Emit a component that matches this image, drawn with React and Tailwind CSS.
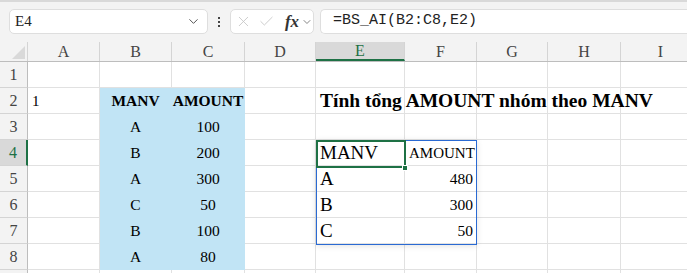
import { X, Check, ChevronDown } from 'lucide-react';

const serif = { fontFamily: '"Liberation Serif", "Times New Roman", serif' };

const cols = ['A', 'B', 'C', 'D', 'E', 'F', 'G', 'H', 'I'];
const widths = [72, 72, 73, 71, 89, 72, 71, 73, 80];

const fill = 'bg-[#c1e4f5] border-[#c1e4f5]';

// cell content per row, keyed by column letter
const rows = {
  1: {},
  2: {
    A: { text: '1', align: 'left', size: 'text-[15px]' },
    B: { text: 'MANV', bold: true },
    C: { text: 'AMOUNT', bold: true },
    E: { text: 'Tính tổng AMOUNT nhóm theo MANV', bold: true, align: 'left', size: 'text-[19.5px]', overflow: true },
  },
  3: { B: { text: 'A' }, C: { text: '100' } },
  4: {
    B: { text: 'B' },
    C: { text: '200' },
    E: { text: 'MANV', align: 'left', size: 'text-[19px]' },
    F: { text: 'AMOUNT', align: 'left', size: 'text-[15px]' },
  },
  5: { B: { text: 'A' }, C: { text: '300' }, E: { text: 'A', align: 'left', size: 'text-[19px]' }, F: { text: '480', align: 'right' } },
  6: { B: { text: 'C' }, C: { text: '50' }, E: { text: 'B', align: 'left', size: 'text-[19px]' }, F: { text: '300', align: 'right' } },
  7: { B: { text: 'B' }, C: { text: '100' }, E: { text: 'C', align: 'left', size: 'text-[19px]' }, F: { text: '50', align: 'right' } },
  8: { B: { text: 'A' }, C: { text: '80' } },
  9: {},
};

function Cell({ col, row, data }) {
  const filled = (col === 'B' || col === 'C') && row >= 2 && row <= 8;
  const justify =
    data?.align === 'left' ? 'justify-start pl-[4px]' : data?.align === 'right' ? 'justify-end pr-[3px]' : 'justify-center';
  return (
    <div
      className={`relative flex h-[26px] shrink-0 items-end border-b border-r pb-[1px] ${
        filled ? fill : 'border-[#e1e1e1] bg-white'
      } ${justify} ${data?.overflow ? 'z-10 overflow-visible' : 'overflow-hidden'}`}
      style={{ width: widths[cols.indexOf(col)] }}
    >
      {data && (
        <span
          className={`whitespace-nowrap leading-[22px] text-black ${data.size || 'text-[15.5px]'} ${
            data.bold ? 'font-bold' : ''
          }`}
          style={serif}
        >
          {data.text}
        </span>
      )}
    </div>
  );
}

export default function App() {
  return (
    <div className="h-[273px] w-[687px] overflow-hidden bg-[#f3f3f3]">
      {/* formula bar */}
      <div className="flex h-[42px] items-start border-t-[2px] border-[#d9d9d9] pt-[7px]">
        <div className="ml-[9px] flex h-[25px] w-[199px] items-center justify-between rounded-[5px] border border-[#dedede] bg-white pl-[5px] pr-[6px]">
          <span className="text-[15px] text-[#222]" style={serif}>E4</span>
          <ChevronDown size={15} strokeWidth={1.6} className="text-[#555]" />
        </div>
        <div className="flex h-[25px] w-[22px] flex-col items-center justify-center gap-[2px]">
          <span className="h-[2px] w-[2px] bg-[#444]" />
          <span className="h-[2px] w-[2px] bg-[#444]" />
          <span className="h-[2px] w-[2px] bg-[#444]" />
        </div>
        <div className="flex h-[25px] w-[84px] items-center rounded-[5px] border border-[#dedede] bg-white pl-[4px]">
          <X size={17} strokeWidth={1.2} className="text-[#c4c4c4]" />
          <Check size={17} strokeWidth={1.2} className="ml-[6px] text-[#c4c4c4]" />
          <span className="ml-[10px] text-[17px] font-bold italic text-[#333]" style={serif}>fx</span>
          <ChevronDown size={12} strokeWidth={1.6} className="ml-[2px] text-[#666]" />
        </div>
        <div className="ml-[6px] flex h-[25px] flex-1 items-center rounded-l-[5px] border border-r-0 border-[#dedede] bg-white pl-[12px]">
          <span className="text-[15px] text-[#222]" style={{ fontFamily: '"Liberation Mono", monospace' }}>
            =BS_AI(B2:C8,E2)
          </span>
        </div>
      </div>

      {/* sheet */}
      <div className="relative">
        {/* column headers */}
        <div className="flex h-[20px] border-b border-[#bdbdbd] bg-[#f3f3f3]">
          <div className="relative h-full w-[28px] shrink-0 border-r border-[#d4d4d4]">
            <svg className="absolute bottom-[2px] right-[2px]" width="13" height="13">
              <polygon points="13,0 13,13 0,13" fill="#d9d9d9" />
            </svg>
          </div>
          {cols.map((c, i) => (
            <div
              key={c}
              className={`flex shrink-0 items-center justify-center border-r border-[#d4d4d4] text-[16px] ${
                c === 'E' ? 'border-b-[2px] border-b-[#1e7145] bg-[#d9d9d9] text-[#1e7145]' : 'text-[#444]'
              }`}
              style={{ ...serif, width: widths[i] }}
            >
              {c}
            </div>
          ))}
        </div>

        {/* rows */}
        {[1, 2, 3, 4, 5, 6, 7, 8, 9].map(r => (
          <div key={r} className="flex">
            <div
              className={`flex h-[26px] w-[28px] shrink-0 items-center justify-center border-b border-[#d4d4d4] text-[16px] ${
                r === 4
                  ? 'border-r-[2px] border-r-[#1e7145] bg-[#d9d9d9] text-[#1e7145]'
                  : 'border-r border-r-[#bdbdbd] bg-[#f3f3f3] text-[#444]'
              }`}
              style={serif}
            >
              {r < 9 ? r : ''}
            </div>
            {cols.map(c => (
              <Cell key={c} col={c} row={r} data={rows[r][c]} />
            ))}
          </div>
        ))}

        {/* selection range E4:F7 */}
        <div className="pointer-events-none absolute left-[316px] top-[98px] z-20 h-[105px] w-[161px] border border-[#2a6ad3] shadow-[0_1px_6px_rgba(0,0,0,0.12)]" />
        {/* active cell E4 */}
        <div className="pointer-events-none absolute left-[316px] top-[98px] z-30 h-[28px] w-[90px] border-[2px] border-[#1e7145]" />
        <div className="pointer-events-none absolute left-[402px] top-[123px] z-40 h-[6px] w-[6px] border border-white bg-[#1e7145]" />
      </div>
    </div>
  );
}
